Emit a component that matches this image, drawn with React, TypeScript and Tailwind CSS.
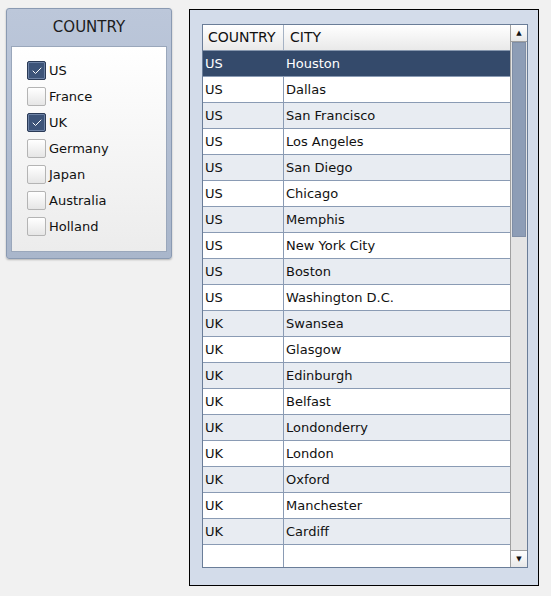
import { Check } from "lucide-react";

const COUNTRIES = [
  { name: "US", checked: true },
  { name: "France", checked: false },
  { name: "UK", checked: true },
  { name: "Germany", checked: false },
  { name: "Japan", checked: false },
  { name: "Australia", checked: false },
  { name: "Holland", checked: false },
];

const ROWS: [string, string][] = [
  ["US", "Houston"],
  ["US", "Dallas"],
  ["US", "San Francisco"],
  ["US", "Los Angeles"],
  ["US", "San Diego"],
  ["US", "Chicago"],
  ["US", "Memphis"],
  ["US", "New York City"],
  ["US", "Boston"],
  ["US", "Washington D.C."],
  ["UK", "Swansea"],
  ["UK", "Glasgow"],
  ["UK", "Edinburgh"],
  ["UK", "Belfast"],
  ["UK", "Londonderry"],
  ["UK", "London"],
  ["UK", "Oxford"],
  ["UK", "Manchester"],
  ["UK", "Cardiff"],
];

function CheckBox({ checked }: { checked: boolean }) {
  if (checked)
    return (
      <span className="flex h-[19px] w-[19px] items-center justify-center rounded-[2px] border border-[#2a3a56] bg-[#3d5479] shadow-[inset_0_0_0_1px_#6e83a6]">
        <Check size={12} strokeWidth={2} className="text-white" />
      </span>
    );
  return <span className="h-[19px] w-[19px] rounded-[2px] border border-[#b4b4b4] bg-gradient-to-b from-white to-[#e6e6e6]" />;
}

export default function App() {
  return (
    <div className="flex min-h-[596px] w-[551px] items-start bg-[#f1f1f1] font-['DejaVu_Sans',sans-serif] text-[13px] text-[#111]">
      {/* country filter */}
      <div className="ml-[6px] mt-[8px] flex h-[251px] w-[166px] flex-col rounded-[3px] border border-[#8a9ab2] bg-gradient-to-b from-[#bcc7da] to-[#a9b6cb] px-[4px] pb-[6px] shadow-[0_1px_2px_rgba(0,0,0,0.25)]">
        <div className="flex h-[37px] items-center justify-center text-[15px] text-[#1c1c1c]">COUNTRY</div>
        <div className="flex flex-1 flex-col gap-[7px] border border-[#9aa7bb] bg-gradient-to-b from-white to-[#ececec] pl-[15px] pt-[14px]">
          {COUNTRIES.map((c) => (
            <div key={c.name} className="flex h-[19px] items-center gap-[3px]">
              <CheckBox checked={c.checked} />
              <span>{c.name}</span>
            </div>
          ))}
        </div>
      </div>

      {/* grid */}
      <div className="ml-[17px] mt-[9px] h-[577px] w-[350px] border border-black bg-[#d3dcea] pl-[12px] pt-[14px]">
        <div className="flex h-[544px] w-[326px] border border-[#6a7d98] bg-white">
          <div className="flex flex-1 flex-col">
            <div className="flex h-[26px] shrink-0 border-b border-[#8797ae] bg-gradient-to-b from-white to-[#e9e9e9] text-[14px]">
              <div className="flex w-[81px] items-center border-r border-[#a5b2c4] pl-[5px]">COUNTRY</div>
              <div className="flex flex-1 items-center pl-[6px]">CITY</div>
            </div>
            {ROWS.map(([country, city], i) => {
              const sel = i === 0;
              const bg = sel ? "bg-[#344a6b] text-white" : i % 2 === 0 ? "bg-[#e8ecf2]" : "bg-white";
              return (
                <div key={city} className={`flex h-[26px] shrink-0 border-b border-[#8a9bb4] ${bg}`}>
                  <div className={`flex w-[81px] items-center pl-[2px] ${sel ? "" : "border-r border-[#8a9bb4]"}`}>{country}</div>
                  <div className="flex flex-1 items-center pl-[2px]">{city}</div>
                </div>
              );
            })}
            <div className="flex flex-1">
              <div className="w-[81px] border-r border-[#8a9bb4]" />
            </div>
          </div>
          {/* scrollbar */}
          <div className="flex w-[17px] flex-col border-l border-[#a0a0a0] bg-[#e4e4e4]">
            <div className="flex h-[17px] items-center justify-center border-b border-[#a0a0a0] bg-gradient-to-b from-white to-[#e8e8e8] text-[7px]">▲</div>
            <div className="mx-[1px] h-[195px] border border-[#7f8ea6] bg-[#8d9db6]" />
            <div className="flex-1" />
            <div className="flex h-[17px] items-center justify-center border-t border-[#a0a0a0] bg-gradient-to-b from-white to-[#e8e8e8] text-[7px]">▼</div>
          </div>
        </div>
      </div>
    </div>
  );
}
